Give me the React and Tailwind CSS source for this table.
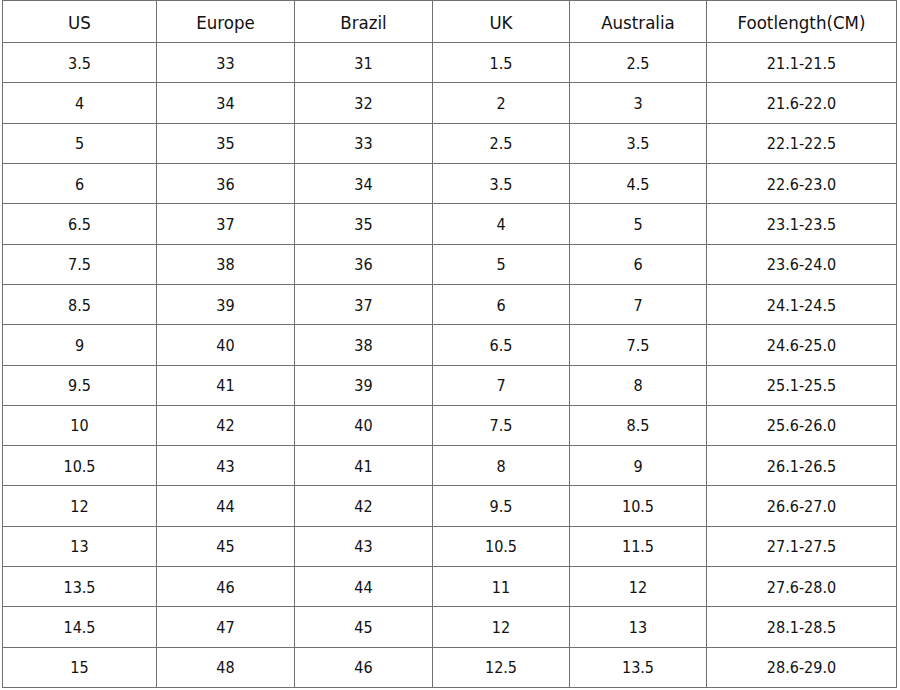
const headers = ["US", "Europe", "Brazil", "UK", "Australia", "Footlength(CM)"];
const rows = [
  ["3.5", "33", "31", "1.5", "2.5", "21.1-21.5"],
  ["4", "34", "32", "2", "3", "21.6-22.0"],
  ["5", "35", "33", "2.5", "3.5", "22.1-22.5"],
  ["6", "36", "34", "3.5", "4.5", "22.6-23.0"],
  ["6.5", "37", "35", "4", "5", "23.1-23.5"],
  ["7.5", "38", "36", "5", "6", "23.6-24.0"],
  ["8.5", "39", "37", "6", "7", "24.1-24.5"],
  ["9", "40", "38", "6.5", "7.5", "24.6-25.0"],
  ["9.5", "41", "39", "7", "8", "25.1-25.5"],
  ["10", "42", "40", "7.5", "8.5", "25.6-26.0"],
  ["10.5", "43", "41", "8", "9", "26.1-26.5"],
  ["12", "44", "42", "9.5", "10.5", "26.6-27.0"],
  ["13", "45", "43", "10.5", "11.5", "27.1-27.5"],
  ["13.5", "46", "44", "11", "12", "27.6-28.0"],
  ["14.5", "47", "45", "12", "13", "28.1-28.5"],
  ["15", "48", "46", "12.5", "13.5", "28.6-29.0"],
];

export default function App() {
  return (
    <div className="w-[900px] h-[690px] bg-white overflow-hidden">
      <div
        className="ml-[2px] w-[895px] grid grid-cols-[154px_138px_138px_137px_137px_190px] grid-rows-[42px_repeat(16,40.3125px)] border-l border-t border-[#707070] text-[#111111]"
        style={{ fontFamily: '"DejaVu Sans Condensed", "DejaVu Sans", Verdana, sans-serif' }}
      >
        {headers.map((c, j) => (
          <div
            key={"h-" + j}
            className="flex items-center justify-center border-r border-b border-[#707070] pt-[3px] text-[18.5px]"
          >
            {c}
          </div>
        ))}
        {rows.map((r, i) =>
          r.map((c, j) => (
            <div
              key={i + "-" + j}
              className="flex items-center justify-center border-r border-b border-[#707070] pt-[2px] text-[16px]"
            >
              {c}
            </div>
          ))
        )}
      </div>
    </div>
  );
}
